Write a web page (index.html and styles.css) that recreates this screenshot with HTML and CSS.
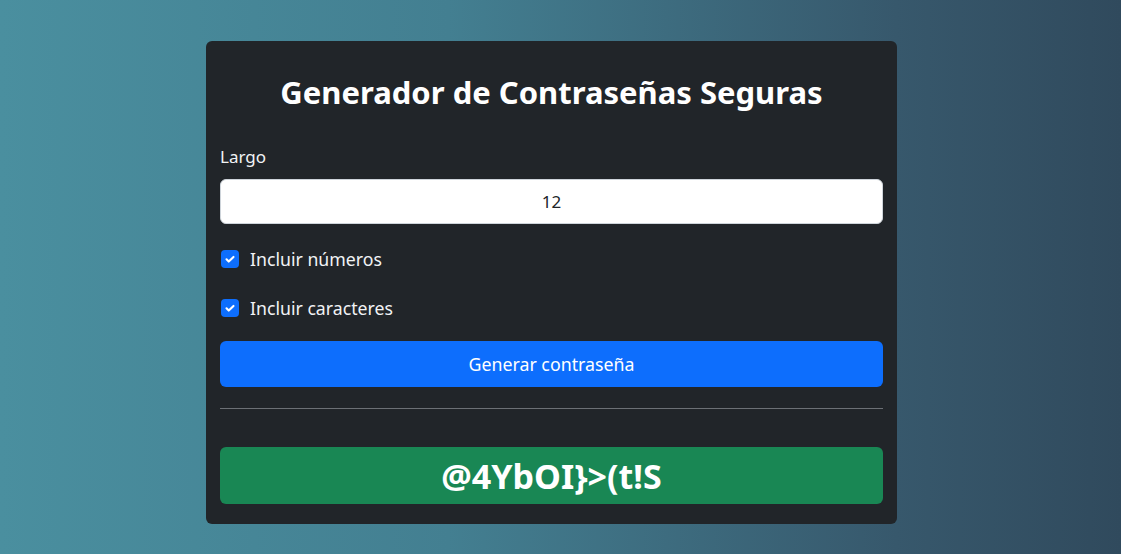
FILE: index.html
```html
<!DOCTYPE html>
<html lang="es">
<head>
<meta charset="utf-8">
<title>Generador de Contraseñas Seguras</title>
<link rel="stylesheet" href="styles.css">
</head>
<body>
<main class="card">
  <h1 class="title">Generador de Contraseñas Seguras</h1>
  <label class="label" for="largo">Largo</label>
  <div class="input">12</div>
  <div class="check-row first">
    <span class="box"><svg viewBox="0 0 20 20" width="14" height="14"><path d="M5 10.5l3.2 3.2L15 7" fill="none" stroke="#fff" stroke-width="3" stroke-linecap="round" stroke-linejoin="round"/></svg></span>
    <span class="check-text">Incluir números</span>
  </div>
  <div class="check-row">
    <span class="box"><svg viewBox="0 0 20 20" width="14" height="14"><path d="M5 10.5l3.2 3.2L15 7" fill="none" stroke="#fff" stroke-width="3" stroke-linecap="round" stroke-linejoin="round"/></svg></span>
    <span class="check-text">Incluir caracteres</span>
  </div>
  <div class="btn">Generar contraseña</div>
  <hr class="sep">
  <div class="result">@4YbOI}&gt;(t!S</div>
</main>
</body>
</html>
```

FILE: styles.css
```css
* { box-sizing: border-box; }
html, body { margin: 0; height: 100%; }
body {
  background: linear-gradient(90deg, #4a8f9f 0%, #437f91 40%, #37586c 80%, #304a5d 100%);
  font-family: "Noto Sans", "Open Sans", sans-serif;
  padding-top: 41px;
  overflow: hidden;
}
.card {
  width: 691px;
  margin-left: 206px;
  background: #212529;
  border-radius: 6px;
  padding: 32px 14px 20px;
  display: flex;
  flex-direction: column;
}
.title {
  margin: 0;
  font-size: 31px;
  line-height: 38px;
  font-weight: 700;
  color: #fff;
  text-align: center;
}
.label {
  margin-top: 33px;
  font-size: 17px;
  line-height: 25px;
  color: #f1f3f5;
}
.input {
  margin-top: 10px;
  height: 45px;
  background: #fff;
  border: 1px solid #ced4da;
  border-radius: 6px;
  display: flex;
  align-items: center;
  justify-content: center;
  font-size: 17px;
  color: #212529;
}
.check-row {
  display: flex;
  align-items: center;
  height: 25px;
  margin-top: 24px;
  color: #f1f3f5;
  font-size: 17.7px;
}
.check-row.first { margin-top: 22px; }
.box {
  width: 18px;
  height: 18px;
  margin-left: 1px;
  margin-right: 11px;
  background: #0d6efd;
  border-radius: 4px;
  display: flex;
  align-items: center;
  justify-content: center;
}
.btn {
  margin-top: 21px;
  height: 46px;
  background: #0d6efd;
  border-radius: 6px;
  color: #fff;
  font-size: 17.8px;
  display: flex;
  align-items: center;
  justify-content: center;
}
.sep {
  margin: 21px 0 0;
  border: 0;
  border-top: 1px solid #6c7075;
}
.result {
  margin-top: 38px;
  height: 57px;
  background: #198754;
  border-radius: 6px;
  color: #fff;
  font-size: 34px;
  font-weight: 700;
  display: flex;
  align-items: center;
  justify-content: center;
}
```
